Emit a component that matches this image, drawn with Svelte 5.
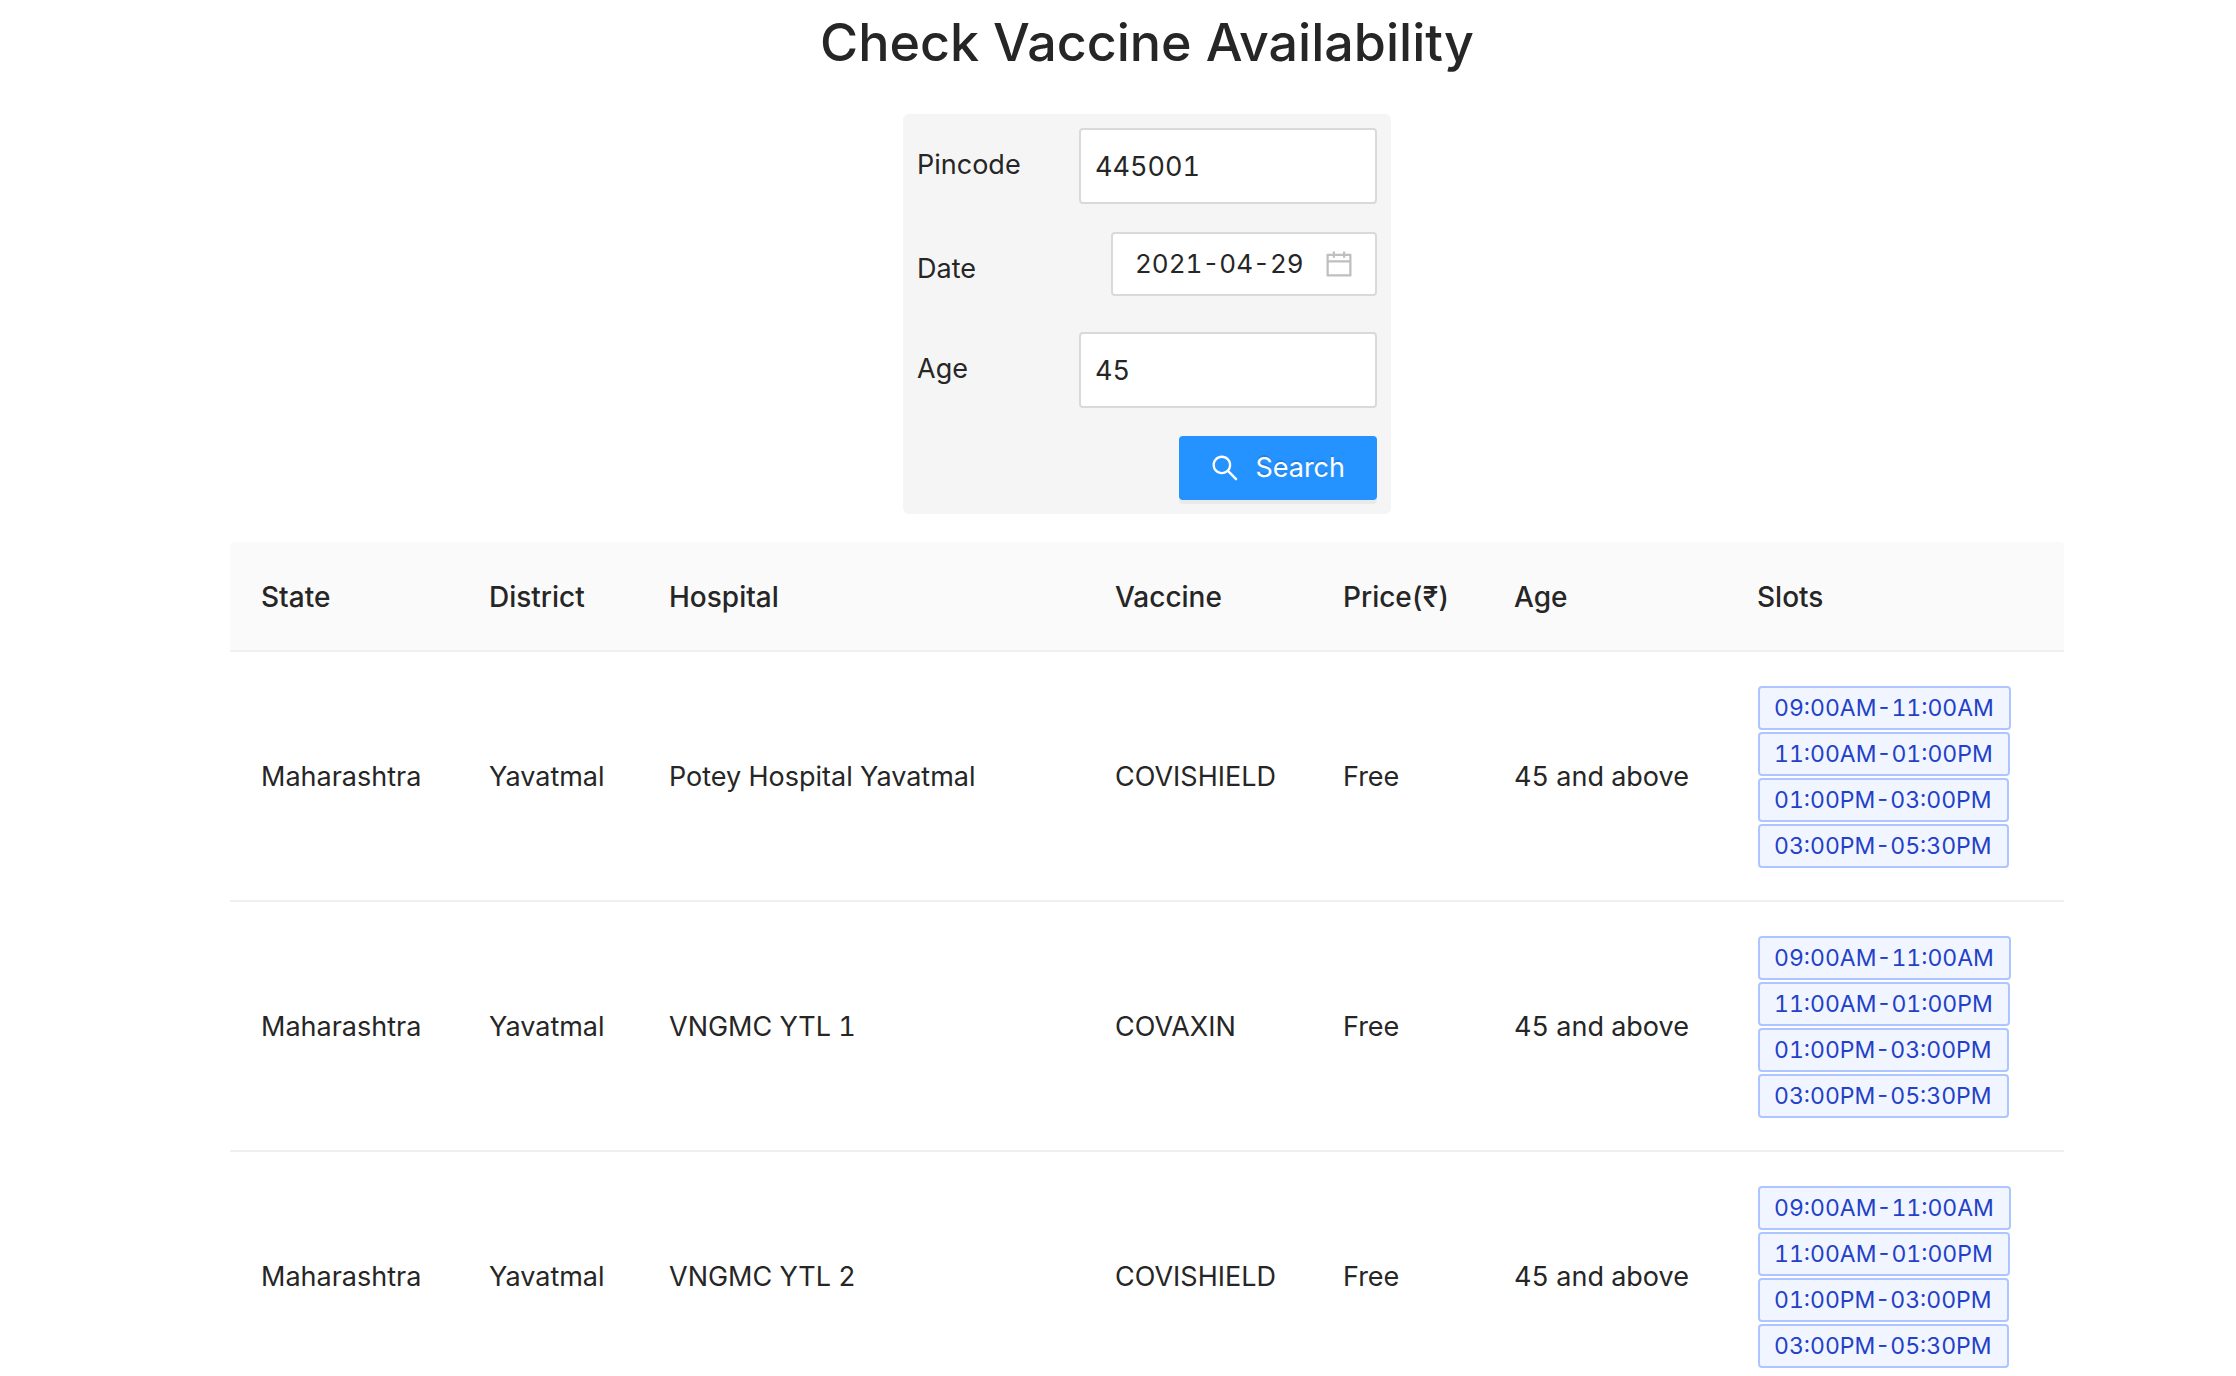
<script>
  let pincode = $state('445001');
  let date = $state('2021-04-29');
  let age = $state('45');

  const columns = [
    { label: 'State', share: 228 },
    { label: 'District', share: 180 },
    { label: 'Hospital', share: 446 },
    { label: 'Vaccine', share: 228 },
    { label: 'Price(₹)', share: 171 },
    { label: 'Age', share: 243 },
    { label: 'Slots', share: 338 },
  ];
  const total = columns.reduce((sum, c) => sum + c.share, 0);

  const slots = ['09:00AM-11:00AM', '11:00AM-01:00PM', '01:00PM-03:00PM', '03:00PM-05:30PM'];
  const centers = [
    { hospital: 'Potey Hospital Yavatmal', vaccine: 'COVISHIELD' },
    { hospital: 'VNGMC YTL 1', vaccine: 'COVAXIN' },
    { hospital: 'VNGMC YTL 2', vaccine: 'COVISHIELD' },
  ];
</script>

<main>
  <h1>Check Vaccine Availability</h1>

  <form onsubmit={(e) => e.preventDefault()}>
    <div class="field">
      <label for="pincode">Pincode</label>
      <input id="pincode" class="box" type="text" bind:value={pincode} />
    </div>
    <div class="field">
      <label for="date">Date</label>
      <div class="picker">
        <input id="date" type="text" bind:value={date} />
        <svg viewBox="64 64 896 896" aria-hidden="true"><path d="M880 184H712v-64c0-4.400-3.600-8-8-8h-56c-4.400 0-8 3.600-8 8v64H384v-64c0-4.400-3.600-8-8-8h-56c-4.400 0-8 3.600-8 8v64H144c-17.700 0-32 14.300-32 32v664c0 17.700 14.300 32 32 32h736c17.700 0 32-14.300 32-32V216c0-17.700-14.300-32-32-32zm-40 656H184V460h656v380zM184 392V256h128v48c0 4.400 3.600 8 8 8h56c4.400 0 8-3.600 8-8v-48h256v48c0 4.400 3.600 8 8 8h56c4.400 0 8-3.600 8-8v-48h128v136H184z" /></svg>
      </div>
    </div>
    <div class="field">
      <label for="age">Age</label>
      <input id="age" class="box" type="text" bind:value={age} />
    </div>
    <button type="submit">
      <svg viewBox="64 64 896 896" aria-hidden="true"><path d="M909.6 854.5L649.9 594.8C690.2 542.7 712 479 712 412c0-80.2-31.3-155.4-87.9-212.1-56.6-56.7-132-87.9-212.1-87.9s-155.5 31.3-212.1 87.9C143.2 256.5 112 331.8 112 412c0 80.1 31.3 155.5 87.9 212.1C256.5 680.8 331.8 712 412 712c67 0 130.6-21.8 182.7-62l259.7 259.6a8.2 8.2 0 0011.6 0l43.6-43.5a8.2 8.2 0 000-11.6zM570.4 570.4C528 612.7 471.8 636 412 636s-116-23.3-158.4-65.6C211.3 528 188 471.8 188 412s23.3-116.1 65.6-158.4C296 211.3 352.2 188 412 188s116.1 23.2 158.4 65.6S636 352.2 636 412s-23.3 116.1-65.6 158.4z" /></svg>
      <span>Search</span>
    </button>
  </form>

  <table>
    <colgroup>
      {#each columns as c}
        <col style="width: {(c.share / total) * 100}%" />
      {/each}
    </colgroup>
    <thead>
      <tr>
        {#each columns as c}<th scope="col">{c.label}</th>{/each}
      </tr>
    </thead>
    <tbody>
      {#each centers as c}
        <tr>
          <td>Maharashtra</td>
          <td>Yavatmal</td>
          <td>{c.hospital}</td>
          <td>{c.vaccine}</td>
          <td>Free</td>
          <td>45 and above</td>
          <td>
            <ul>
              {#each slots as s}<li>{s}</li>{/each}
            </ul>
          </td>
        </tr>
      {/each}
    </tbody>
  </table>
</main>

<style>
  :global(body) {
    margin: 0;
    background: #fff;
  }
  main {
    display: flex;
    flex-direction: column;
    align-items: center;
    padding: 0 172px 0 230px;
    font-family: Inter, 'Liberation Sans', sans-serif;
    font-size: 27px;
    line-height: 44px;
    color: #262626;
    font-variant-numeric: tabular-nums;
  }
  h1 {
    margin: 8px 0 36px;
    font-size: 52px;
    line-height: 70px;
    font-weight: 500;
  }
  form {
    box-sizing: border-box;
    width: 488px;
    max-width: 100%;
    padding: 14px;
    display: flex;
    flex-direction: column;
    gap: 28px;
    background: #f5f5f5;
    border-radius: 6px;
  }
  .field {
    display: flex;
    justify-content: space-between;
    align-items: flex-start;
    min-height: 72px;
  }
  label {
    padding-top: 15px;
  }
  input {
    box-sizing: border-box;
    min-width: 0;
    margin: 0;
    font: inherit;
    font-variant-numeric: inherit;
    color: inherit;
    outline: none;
  }
  .box,
  .picker {
    border: 2px solid #d9d9d9;
    border-radius: 4px;
    background: #fff;
  }
  .box {
    width: 298px;
    height: 76px;
    padding: 0 14px;
  }
  .picker {
    box-sizing: border-box;
    width: 266px;
    height: 64px;
    padding: 0 22px;
    display: flex;
    align-items: center;
    justify-content: space-between;
    font-size: 26px;
  }
  .picker input {
    width: 176px;
    padding: 0;
    border: 0;
    background: none;
  }
  svg {
    flex: none;
    width: 28px;
    height: 28px;
    fill: currentColor;
  }
  .picker svg {
    color: #bfbfbf;
  }
  button {
    align-self: flex-end;
    display: flex;
    align-items: center;
    gap: 16px;
    height: 64px;
    padding: 0 32px;
    border: 0;
    border-radius: 4px;
    background: #2593ff;
    box-shadow: 0 4px 0 rgba(0, 0, 0, 0.045);
    color: #fff;
    font: inherit;
    text-shadow: 0 -2px 0 rgba(0, 0, 0, 0.12);
  }
  table {
    width: 100%;
    margin-top: 28px;
    table-layout: fixed;
    border-collapse: separate;
    border-spacing: 0;
  }
  th,
  td {
    padding: 33px 31px 31px;
    border-bottom: 2px solid #f0f0f0;
    text-align: left;
    vertical-align: middle;
  }
  th {
    background: #fafafa;
    font-size: 28px;
    font-weight: 500;
  }
  th:first-child {
    border-top-left-radius: 4px;
  }
  th:last-child {
    border-top-right-radius: 4px;
  }
  ul {
    display: flex;
    flex-direction: column;
    align-items: flex-start;
    gap: 2px;
    margin: 0;
    padding: 1px 0 1px 1px;
    list-style: none;
  }
  li {
    padding: 0 15px 0 14px;
    border: 2px solid #adc6ff;
    border-radius: 4px;
    background: #f0f5ff;
    color: #2341c8;
    font-size: 23px;
    line-height: 40px;
  }
</style>
